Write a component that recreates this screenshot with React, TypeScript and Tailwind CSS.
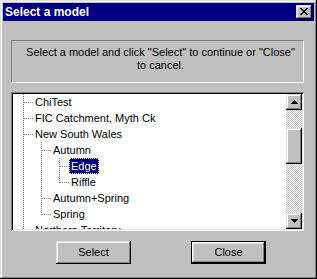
import React from "react";

type Row = { label: string; level: number; anc: boolean[]; last: boolean; selected?: boolean };

const rows: Row[] = [
  { label: "ChiTest", level: 0, anc: [], last: false },
  { label: "FIC Catchment, Myth Ck", level: 0, anc: [], last: false },
  { label: "New South Wales", level: 0, anc: [], last: false },
  { label: "Autumn", level: 1, anc: [true], last: false },
  { label: "Edge", level: 2, anc: [true, true], last: false, selected: true },
  { label: "Riffle", level: 2, anc: [true, true], last: true },
  { label: "Autumn+Spring", level: 1, anc: [true], last: false },
  { label: "Spring", level: 1, anc: [true], last: true },
  { label: "Northern Territory", level: 0, anc: [], last: false },
];

function Connectors({ row }: { row: Row }) {
  const w = 20 + 18 * row.level;
  const own = 10 + 18 * row.level + 0.5;
  return (
    <svg width={w} height={16} className="shrink-0" shapeRendering="crispEdges">
      {row.anc.map((c, a) =>
        c ? (
          <line key={a} x1={10 + 18 * a + 0.5} y1={0} x2={10 + 18 * a + 0.5} y2={16} stroke="#808080" strokeDasharray="1 1" />
        ) : null
      )}
      <line x1={own} y1={0} x2={own} y2={row.last ? 9 : 16} stroke="#808080" strokeDasharray="1 1" />
      <line x1={11 + 18 * row.level} y1={8.5} x2={20 + 18 * row.level} y2={8.5} stroke="#808080" strokeDasharray="1 1" />
    </svg>
  );
}

function Arrow({ down }: { down?: boolean }) {
  const r = down ? [7, 5, 3, 1] : [1, 3, 5, 7];
  return (
    <svg width={7} height={4} shapeRendering="crispEdges">
      {r.map((n, i) => (
        <rect key={i} x={(7 - n) / 2} y={i} width={n} height={1} fill="#000" />
      ))}
    </svg>
  );
}

const raised =
  "shadow-[inset_-1px_-1px_0_#000,inset_1px_1px_0_#dfdfdf,inset_-2px_-2px_0_#808080,inset_2px_2px_0_#fff]";

export default function App() {
  return (
    <div
      className={`w-[317px] h-[279px] bg-[#c0c0c0] p-[3px] flex flex-col font-['Liberation_Sans',Arial,sans-serif] text-[11px] text-black shadow-[inset_-1px_-1px_0_#000,inset_1px_1px_0_#dfdfdf,inset_-2px_-2px_0_#808080,inset_2px_2px_0_#fff]`}
    >
      {/* Title bar */}
      <div className="h-[18px] bg-[#000080] flex items-center justify-between pl-[2px] pr-[2px] shrink-0">
        <span className="text-white font-bold text-[12px] leading-none">Select a model</span>
        <div className={`w-[16px] h-[14px] bg-[#c0c0c0] pl-[4px] pt-[3px] ${raised}`}>
          <svg width={8} height={7} shapeRendering="crispEdges" className="block">
            <rect x={0} y={0} width={2} height={1} />
            <rect x={6} y={0} width={2} height={1} />
            <rect x={1} y={1} width={2} height={1} />
            <rect x={5} y={1} width={2} height={1} />
            <rect x={2} y={2} width={4} height={1} />
            <rect x={3} y={3} width={2} height={1} />
            <rect x={2} y={4} width={4} height={1} />
            <rect x={1} y={5} width={2} height={1} />
            <rect x={5} y={5} width={2} height={1} />
            <rect x={0} y={6} width={2} height={1} />
            <rect x={6} y={6} width={2} height={1} />
          </svg>
        </div>
      </div>

      {/* Instruction box */}
      <div className="mt-[19px] ml-[8px] w-[293px] h-[43px] border border-t-[#808080] border-l-[#808080] border-b-white border-r-white pl-[6px] pt-[5px] text-center leading-[13px] shrink-0">
        Select a model and click "Select" to continue or "Close"
        <br />
        to cancel.
      </div>

      {/* Tree view */}
      <div className="mt-[9px] ml-[8px] w-[293px] h-[139px] bg-white p-[2px] flex shrink-0 shadow-[inset_1px_1px_0_#808080,inset_-1px_-1px_0_#fff,inset_2px_2px_0_#000,inset_-2px_-2px_0_#dfdfdf]">
        <div className="flex-1 overflow-hidden flex flex-col">
          {rows.map((row, i) => (
            <div key={i} className="h-[16px] flex items-center shrink-0 whitespace-nowrap">
              <Connectors row={row} />
              {row.selected ? (
                <span className="h-[16px] px-[1px] flex items-center bg-[#000080] text-white border border-dotted border-[#ffff80] leading-[14px]">
                  {row.label}
                </span>
              ) : (
                <span className="px-[2px] leading-[16px]">{row.label}</span>
              )}
            </div>
          ))}
        </div>
        <div className="w-[16px] flex flex-col shrink-0">
          <div className={`h-[16px] bg-[#c0c0c0] flex items-center justify-center ${raised}`}>
            <Arrow />
          </div>
          <div className="flex-1 bg-[image:repeating-conic-gradient(#fff_0_25%,#c0c0c0_0_50%)] bg-[length:2px_2px]">
            <div className={`mt-[18px] h-[36px] bg-[#c0c0c0] ${raised}`} />
          </div>
          <div className={`h-[16px] bg-[#c0c0c0] flex items-center justify-center ${raised}`}>
            <Arrow down />
          </div>
        </div>
      </div>

      {/* Buttons */}
      <div className="mt-[10px] flex shrink-0">
        <button className={`ml-[53px] w-[75px] h-[23px] bg-[#c0c0c0] flex items-center justify-center ${raised}`}>
          Select
        </button>
        <button className="ml-[60px] w-[75px] h-[23px] bg-[#c0c0c0] border border-black flex items-center justify-center shadow-[inset_-1px_-1px_0_#000,inset_1px_1px_0_#fff,inset_-2px_-2px_0_#808080,inset_2px_2px_0_#dfdfdf]">
          Close
        </button>
      </div>
    </div>
  );
}
